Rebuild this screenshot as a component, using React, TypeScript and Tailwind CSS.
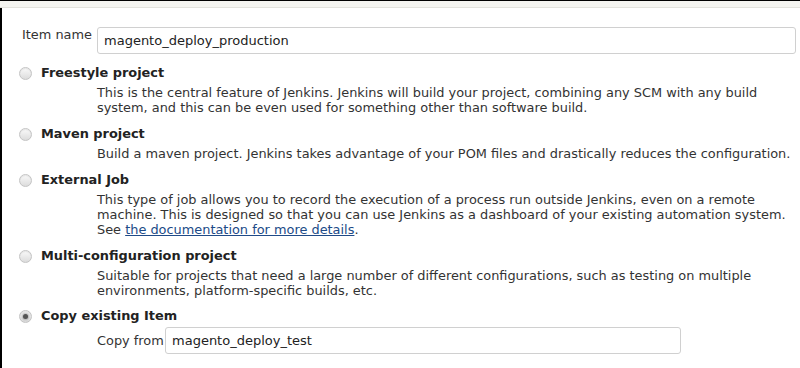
import React from "react";

type Item = {
  title: string;
  desc: React.ReactNode;
  checked?: boolean;
};

function Radio({ checked }: { checked?: boolean }) {
  return (
    <span className="flex h-[13px] w-[13px] items-center justify-center rounded-full border border-[#c4c4c4] bg-gradient-to-b from-[#fafafa] to-[#dcdcdc] shadow-[inset_0_1px_1px_rgba(0,0,0,0.08)]">
      {checked && <span className="h-[5px] w-[5px] rounded-full bg-[#555] shadow-[0_0_2px_1px_rgba(120,120,120,0.5)]" />}
    </span>
  );
}

const items: Item[] = [
  {
    title: "Freestyle project",
    desc: (
      <>
        This is the central feature of Jenkins. Jenkins will build your project, combining any SCM with any build
        <br />
        system, and this can be even used for something other than software build.
      </>
    ),
  },
  {
    title: "Maven project",
    desc: "Build a maven project. Jenkins takes advantage of your POM files and drastically reduces the configuration.",
  },
  {
    title: "External Job",
    desc: (
      <>
        This type of job allows you to record the execution of a process run outside Jenkins, even on a remote
        <br />
        machine. This is designed so that you can use Jenkins as a dashboard of your existing automation system.
        <br />
        See{" "}
        <a href="#" className="text-[#204a87] underline">
          the documentation for more details
        </a>
        .
      </>
    ),
  },
  {
    title: "Multi-configuration project",
    desc: (
      <>
        Suitable for projects that need a large number of different configurations, such as testing on multiple
        <br />
        environments, platform-specific builds, etc.
      </>
    ),
  },
];

export default function App() {
  return (
    <div className="h-[368px] w-[800px] overflow-hidden bg-white text-[12.9px] text-[#333] font-['DejaVu_Sans',sans-serif]">
      {/* top strip */}
      <div className="h-[8px] border-t border-b border-t-black border-b-[#e2e2dc] bg-[#f4f4f0]" />
      <div className="h-[360px] border-l-2 border-black">
        {/* item name */}
        <div className="flex items-start pt-[19px] pl-[20px] pr-[4px]">
          <span className="w-[75px] leading-[16px]">Item name</span>
          <div className="flex h-[27px] flex-1 items-center rounded-[3px] border border-[#d0d0d0] px-[6px] text-[13px] text-[#222]">
            magento_deploy_production
          </div>
        </div>

        <div className="mt-[7px]">
          {items.map((it) => (
            <div key={it.title} className="mb-[7px]">
              <div className="flex h-[24px] items-center pl-[17px]">
                <Radio checked={it.checked} />
                <span className="ml-[9px] font-bold text-[#222]">{it.title}</span>
              </div>
              <div className="pl-[95px] leading-[15px]">{it.desc}</div>
            </div>
          ))}

          <div>
            <div className="flex h-[22px] items-center pl-[17px]">
              <Radio checked />
              <span className="ml-[9px] font-bold text-[#222]">Copy existing Item</span>
            </div>
            <div className="flex items-center pl-[95px]">
              <span className="w-[68px]">Copy from</span>
              <div className="flex h-[27px] w-[516px] items-center rounded-[3px] border border-[#d0d0d0] px-[6px] text-[13px] text-[#222]">
                magento_deploy_test
              </div>
            </div>
          </div>
        </div>
      </div>
    </div>
  );
}
